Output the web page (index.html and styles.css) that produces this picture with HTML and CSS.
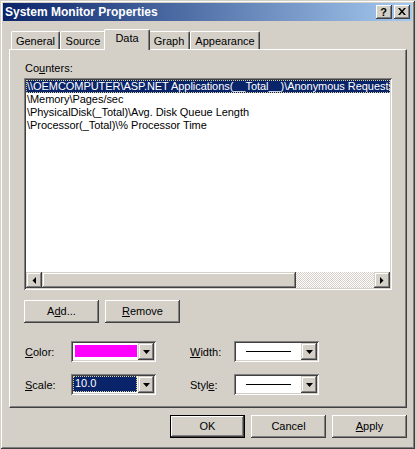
FILE: index.html
```html
<!DOCTYPE html>
<html>
<head>
<meta charset="utf-8">
<link rel="stylesheet" href="styles.css">
</head>
<body>
<div class="window">
  <div class="titlebar">
    <span class="title">System Monitor Properties</span>
    <div class="tbtn help">?</div>
    <div class="tbtn close"><svg width="8" height="7" viewBox="0 0 8 7"><path d="M0 0h2l2 2.4 2-2.4h2l-3 3.5 3 3.5h-2l-2-2.4-2 2.4h-2l3-3.5z" fill="#000"/></svg></div>
  </div>
  <div class="tabs">
    <div class="tab w-general">General</div>
    <div class="tab w-source">Source</div>
    <div class="tab w-data sel">Data</div>
    <div class="tab w-graph">Graph</div>
    <div class="tab w-appearance">Appearance</div>
  </div>
  <div class="panel">
    <div class="label counters">Co<u>u</u>nters:</div>
    <div class="listbox">
      <div class="items">
        <div class="item sel">\\OEMCOMPUTER\ASP.NET Applications(__Total__)\Anonymous Requests</div>
        <div class="item">\Memory\Pages/sec</div>
        <div class="item">\PhysicalDisk(_Total)\Avg. Disk Queue Length</div>
        <div class="item">\Processor(_Total)\% Processor Time</div>
      </div>
      <div class="hscroll">
        <div class="sbtn"><svg width="4" height="7" viewBox="0 0 4 7"><path d="M4 0v7L0.5 3.5z" fill="#000"/></svg></div>
        <div class="thumb"></div>
        <div class="track"></div>
        <div class="sbtn"><svg width="4" height="7" viewBox="0 0 4 7"><path d="M0 0v7l3.5-3.5z" fill="#000"/></svg></div>
      </div>
    </div>
    <div class="btnrow">
      <div class="btn">A<u>d</u>d...</div>
      <div class="btn"><u>R</u>emove</div>
    </div>
    <div class="frow first">
      <div class="flabel"><u>C</u>olor:</div>
      <div class="combo">
        <div class="val"><div class="swatch"></div></div>
        <div class="dd"><svg width="7" height="4" viewBox="0 0 7 4"><path d="M0 0h7L3.5 4z" fill="#000"/></svg></div>
      </div>
      <div class="flabel second"><u>W</u>idth:</div>
      <div class="combo">
        <div class="val"><div class="line"></div></div>
        <div class="dd"><svg width="7" height="4" viewBox="0 0 7 4"><path d="M0 0h7L3.5 4z" fill="#000"/></svg></div>
      </div>
    </div>
    <div class="frow">
      <div class="flabel"><u>S</u>cale:</div>
      <div class="combo">
        <div class="val"><div class="hl">10.0</div></div>
        <div class="dd"><svg width="7" height="4" viewBox="0 0 7 4"><path d="M0 0h7L3.5 4z" fill="#000"/></svg></div>
      </div>
      <div class="flabel second">Styl<u>e</u>:</div>
      <div class="combo">
        <div class="val"><div class="line"></div></div>
        <div class="dd"><svg width="7" height="4" viewBox="0 0 7 4"><path d="M0 0h7L3.5 4z" fill="#000"/></svg></div>
      </div>
    </div>
  </div>
  <div class="footer">
    <div class="btn default">OK</div>
    <div class="btn">Cancel</div>
    <div class="btn"><u>A</u>pply</div>
  </div>
</div>
</body>
</html>
```

FILE: styles.css
```css
* { box-sizing: border-box; }
html, body { margin: 0; padding: 0; background: #d4d0c8; }
body {
  font-family: "Liberation Sans", Arial, sans-serif;
  font-size: 11px;
  line-height: 13px;
  color: #000;
}
u { text-decoration: underline; text-underline-offset: 1px; }

.window {
  width: 415px;
  height: 449px;
  background: #d4d0c8;
  padding: 3px;
  box-shadow: inset 1px 1px #d4d0c8, inset -1px -1px #404040, inset 2px 2px #fff, inset -2px -2px #808080;
  display: flex;
  flex-direction: column;
}

.titlebar {
  height: 18px;
  background: linear-gradient(to right, #0a246a, #a6caf0);
  display: flex;
  align-items: center;
  padding: 0 2px 0 2px;
}
.title {
  flex: 1;
  color: #fff;
  font-weight: bold;
  font-size: 12px;
  line-height: 14px;
}
.tbtn {
  width: 16px;
  height: 14px;
  background: #d4d0c8;
  box-shadow: inset -1px -1px #404040, inset 1px 1px #fff, inset -2px -2px #808080;
  display: flex;
  align-items: center;
  justify-content: center;
}
.tbtn.help {
  font-weight: bold;
  font-size: 11px;
  line-height: 12px;
  padding: 0 1px 1px 0;
}
.tbtn.close { margin-left: 2px; padding-bottom: 1px; }

.tabs {
  display: flex;
  align-items: flex-end;
  height: 20px;
  margin: 8px 0 0 8px;
}
.tab {
  height: 18px;
  background: #d4d0c8;
  border-top: 1px solid #fff;
  border-left: 1px solid #fff;
  border-right: 1px solid #404040;
  box-shadow: inset -1px 0 #808080;
  border-radius: 2px 2px 0 0;
  padding-top: 3px;
  text-align: center;
}
.tab.sel {
  height: 21px;
  margin: 0 -2px -1px -2px;
  padding-top: 2px;
  position: relative;
  z-index: 1;
}
.w-general { width: 49px; }
.w-source { width: 46px; }
.w-data { width: 46px; }
.w-graph { width: 42px; }
.w-appearance { width: 70px; }

.panel {
  width: 398px;
  height: 359px;
  margin-left: 6px;
  border-top: 1px solid #fff;
  border-left: 1px solid #fff;
  border-right: 1px solid #404040;
  border-bottom: 1px solid #404040;
  box-shadow: inset -1px -1px #808080;
  padding: 12px 0 0 14px;
}
.label.counters { margin-left: 1px; height: 13px; }

.listbox {
  margin-top: 3px;
  width: 368px;
  height: 212px;
  background: #fff;
  padding: 2px;
  box-shadow: inset 1px 1px #808080, inset -1px -1px #fff, inset 2px 2px #404040, inset -2px -2px #d4d0c8;
  display: flex;
  flex-direction: column;
}
.items { flex: 1; overflow: hidden; }
.item {
  height: 13px;
  padding-left: 1px;
  white-space: nowrap;
  overflow: hidden;
  letter-spacing: -0.05px;
}
.item.sel {
  background: #0a246a;
  color: #fff;
  outline: 1px dotted #d8cf9c;
  outline-offset: -1px;
}
.hscroll { height: 16px; display: flex; }
.sbtn, .thumb, .dd {
  background: #d4d0c8;
  box-shadow: inset -1px -1px #404040, inset 1px 1px #d4d0c8, inset -2px -2px #808080, inset 2px 2px #fff;
  display: flex;
  align-items: center;
  justify-content: center;
}
.sbtn { width: 16px; height: 16px; }
.thumb { width: 254px; height: 16px; }
.track {
  flex: 1;
  background-color: #d4d0c8;
  background-image: repeating-conic-gradient(#fff 0 25%, #d4d0c8 0 50%);
  background-size: 2px 2px;
}

.btnrow { display: flex; gap: 6px; margin-top: 10px; }
.btn {
  width: 75px;
  height: 23px;
  background: #d4d0c8;
  box-shadow: inset -1px -1px #404040, inset 1px 1px #fff, inset -2px -2px #808080;
  display: flex;
  align-items: center;
  justify-content: center;
}
.btn.default {
  border: 1px solid #000;
  box-shadow: inset -1px -1px #404040, inset 1px 1px #fff, inset -2px -2px #808080;
}

.frow { display: flex; align-items: center; height: 21px; margin-top: 12px; }
.frow.first { margin-top: 18px; }
.flabel { width: 47px; padding-left: 1px; padding-top: 2px; }
.flabel.second { width: 44px; margin-left: 34px; padding-left: 0; }
.combo {
  width: 85px;
  height: 21px;
  background: #fff;
  padding: 2px;
  box-shadow: inset 1px 1px #808080, inset -1px -1px #fff, inset 2px 2px #404040, inset -2px -2px #d4d0c8;
  display: flex;
}
.combo .val { flex: 1; display: flex; align-items: center; justify-content: center; }
.combo .dd { width: 16px; height: 17px; }
.swatch { flex: 1; align-self: stretch; margin: 2px 1px 3px 2px; background: #ff00ff; }
.line { width: 45px; height: 1px; background: #000; }
.hl {
  flex: 1;
  align-self: stretch;
  margin: 0 1px 1px 0;
  background: #0a246a;
  color: #fff;
  outline: 1px dotted #d8cf9c;
  outline-offset: -1px;
  padding-left: 2px;
  line-height: 15px;
}

.footer {
  display: flex;
  gap: 6px;
  justify-content: flex-end;
  width: 398px;
  margin: 7px 0 0 6px;
}
```
